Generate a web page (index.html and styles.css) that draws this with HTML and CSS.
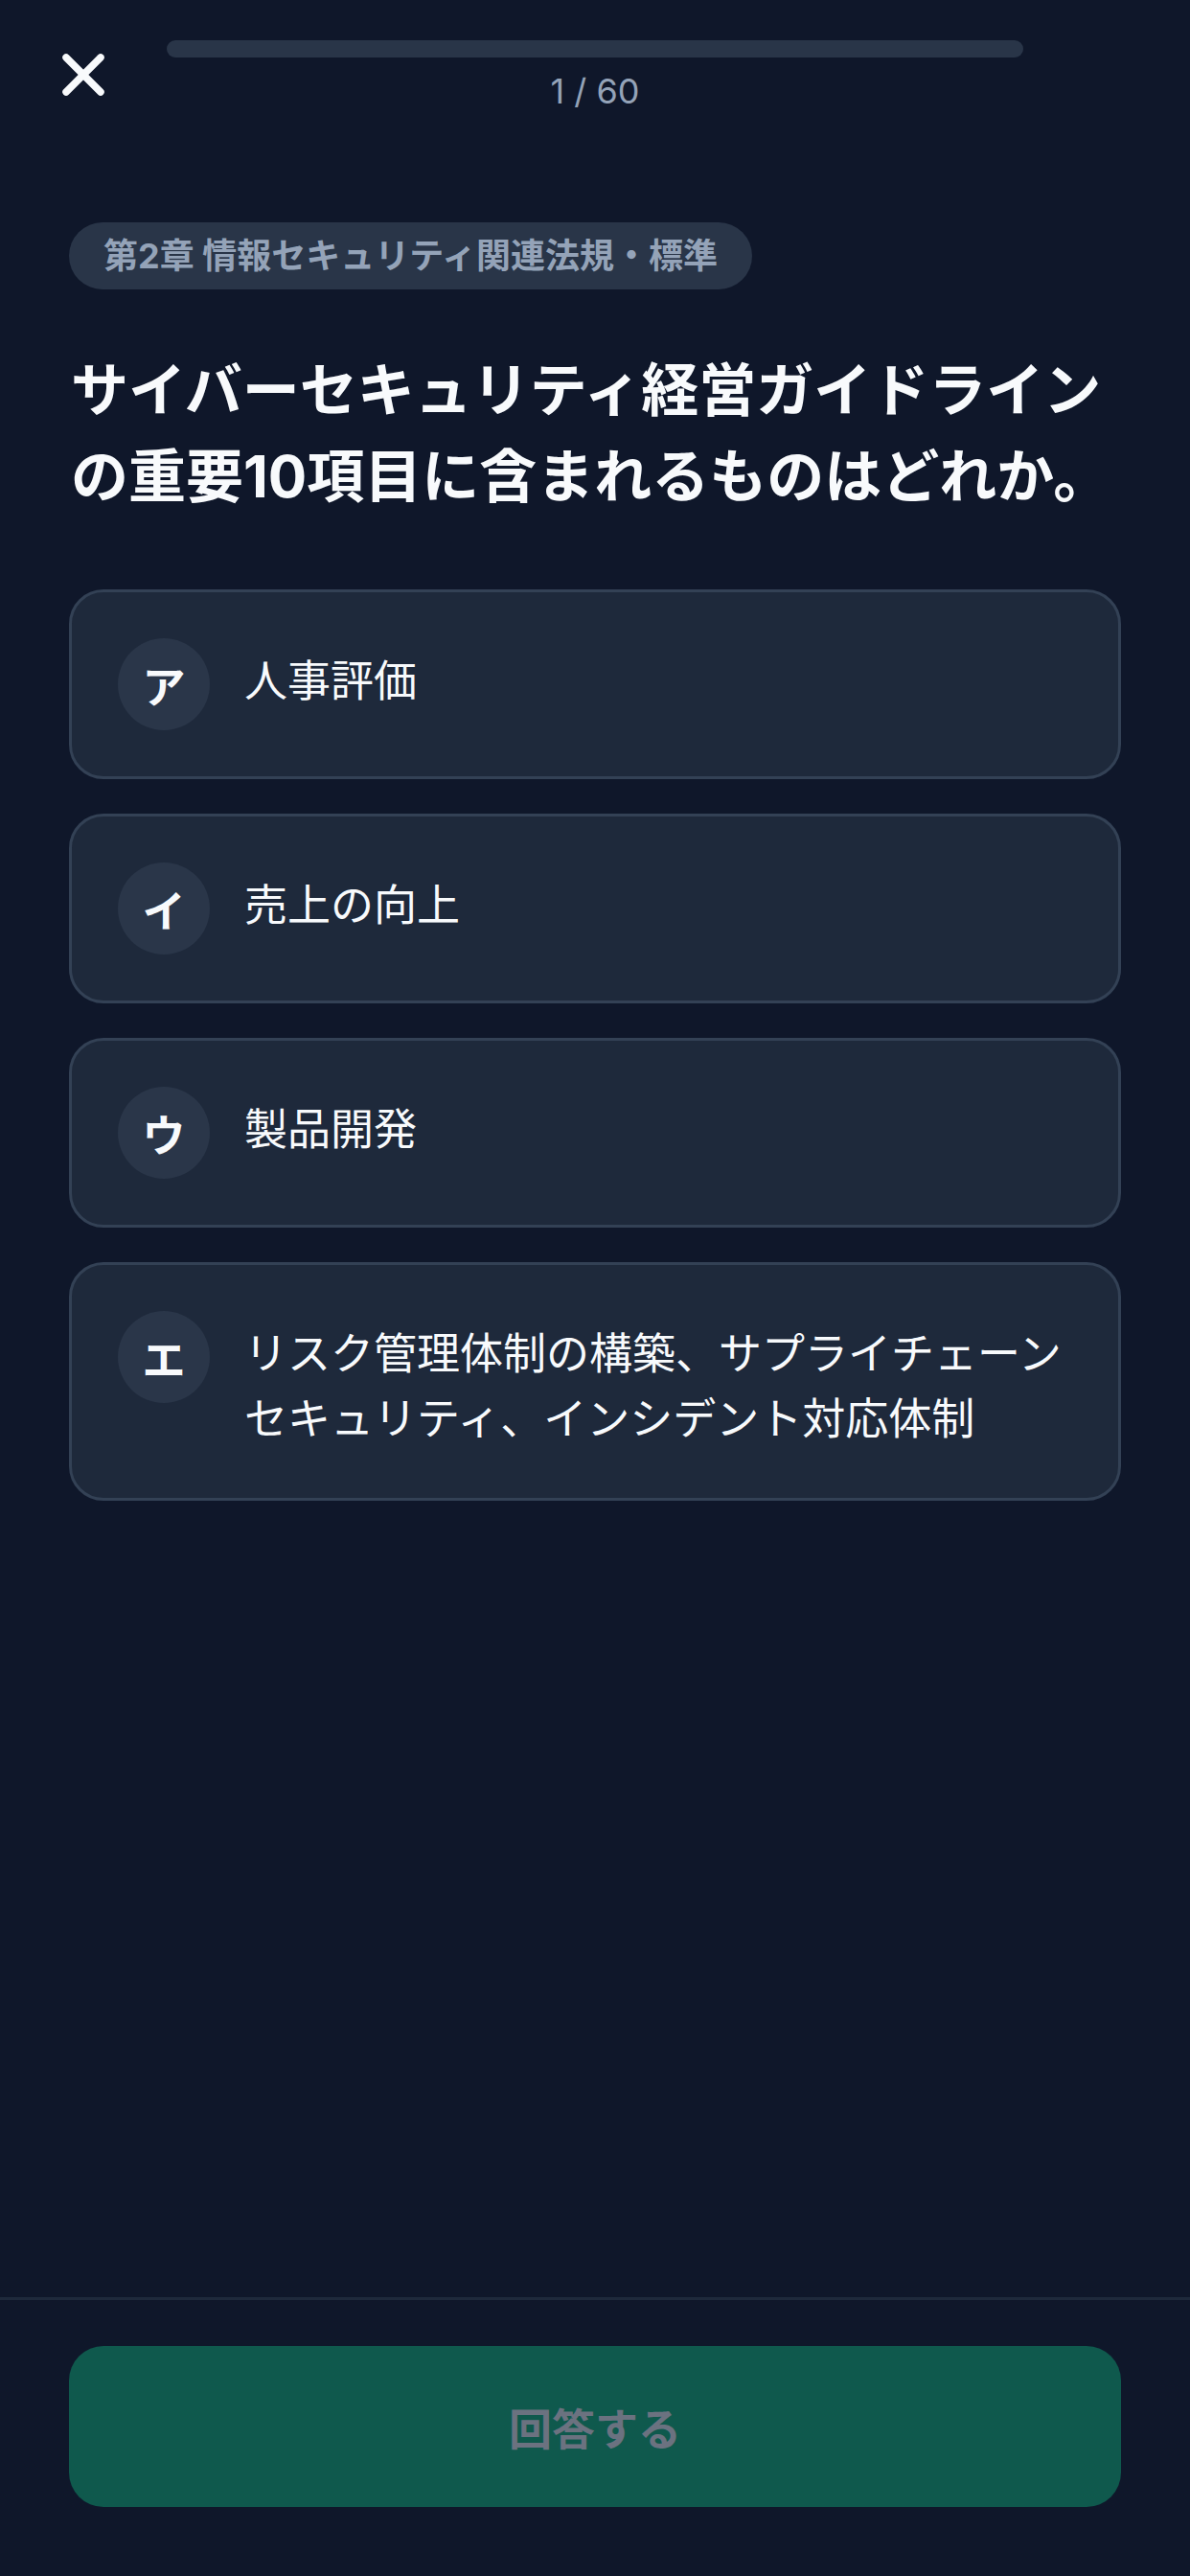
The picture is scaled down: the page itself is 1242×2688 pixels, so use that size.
FILE: index.html
```html
<!DOCTYPE html>
<html lang="ja">
<head>
<meta charset="utf-8">
<title>Quiz</title>
<link rel="stylesheet" href="styles.css">
</head>
<body>
  <header class="topbar">
    <button class="close-btn" aria-label="閉じる">
      <svg viewBox="0 0 24 24" width="72" height="72" fill="none" stroke="#f8fafc" stroke-width="2.5" stroke-linecap="round" stroke-linejoin="round"><path d="M18 6 6 18"/><path d="m6 6 12 12"/></svg>
    </button>
    <div class="progress">
      <div class="progress-track"><div class="progress-fill" style="width: 0%"></div></div>
      <div class="progress-label">1 / 60</div>
    </div>
    <div class="spacer"></div>
  </header>

  <main class="content">
    <div class="chip">第2章 情報セキュリティ関連法規・標準</div>
    <h1 class="question">サイバーセキュリティ経営ガイドラインの重要10項目に含まれるものはどれか。</h1>

    <div class="options">
      <div class="option">
        <span class="badge">ア</span>
        <span class="option-text">人事評価</span>
      </div>
      <div class="option">
        <span class="badge">イ</span>
        <span class="option-text">売上の向上</span>
      </div>
      <div class="option">
        <span class="badge">ウ</span>
        <span class="option-text">製品開発</span>
      </div>
      <div class="option">
        <span class="badge">エ</span>
        <span class="option-text">リスク管理体制の構築、サプライチェーンセキュリティ、インシデント対応体制</span>
      </div>
    </div>
  </main>

  <footer class="footer">
    <button class="submit" disabled>回答する</button>
  </footer>
</body>
</html>
```

FILE: styles.css
```css
* {
  box-sizing: border-box;
}

html, body {
  margin: 0;
  padding: 0;
}

body {
  background: #0f172a;
  color: #f8fafc;
  font-family: Inter, "Noto Sans CJK JP", "Noto Sans", sans-serif;
  min-height: 2688px;
  display: flex;
  flex-direction: column;
}

.topbar {
  display: flex;
  align-items: flex-start;
  gap: 51px;
  padding: 42px 51px 0;
}

.close-btn {
  width: 72px;
  height: 72px;
  padding: 0;
  margin: 0;
  border: 0;
  background: transparent;
  display: flex;
  align-items: center;
  justify-content: center;
  flex-shrink: 0;
}

.close-btn svg {
  display: block;
}

.spacer {
  width: 72px;
  flex-shrink: 0;
}

.progress {
  flex: 1;
  display: flex;
  flex-direction: column;
  align-items: center;
}

.progress-track {
  width: 100%;
  height: 18px;
  border-radius: 9px;
  background: #293548;
  overflow: hidden;
}

.progress-fill {
  height: 100%;
  background: #10b981;
}

.progress-label {
  margin-top: 11px;
  font-size: 36px;
  line-height: 48px;
  color: #94a3b8;
}

.content {
  flex: 1;
  display: flex;
  flex-direction: column;
  align-items: flex-start;
  padding: 113px 72px 0;
}

.chip {
  background: #293548;
  color: #94a3b8;
  font-weight: 700;
  font-size: 36px;
  line-height: 46px;
  padding: 12px 36px;
  border-radius: 35px;
}

.question {
  margin: 60px 0 0;
  font-size: 60px;
  line-height: 90px;
  font-weight: 700;
  color: #f8fafc;
  padding-left: 2px;
}

.options {
  align-self: stretch;
  margin-top: 73px;
  display: flex;
  flex-direction: column;
  gap: 36px;
}

.option {
  display: flex;
  align-items: flex-start;
  gap: 36px;
  padding: 48px;
  background: #1e293b;
  border: 3px solid #334155;
  border-radius: 36px;
}

.badge {
  width: 96px;
  height: 96px;
  flex-shrink: 0;
  border-radius: 50%;
  background: #2a3649;
  color: #f8fafc;
  font-weight: 700;
  font-size: 45px;
  display: flex;
  align-items: center;
  justify-content: center;
}

.option-text {
  flex: 1;
  padding-top: 11px;
  font-size: 45px;
  line-height: 68px;
  color: #f8fafc;
}

.footer {
  border-top: 3px solid #1e293b;
  padding: 48px 72px 72px;
}

.submit {
  display: block;
  width: 100%;
  height: 168px;
  border: 0;
  border-radius: 36px;
  background: #0f594d;
  color: #6b7280;
  font-family: Inter, "Noto Sans CJK JP", "Noto Sans", sans-serif;
  font-weight: 700;
  font-size: 45px;
}
```
